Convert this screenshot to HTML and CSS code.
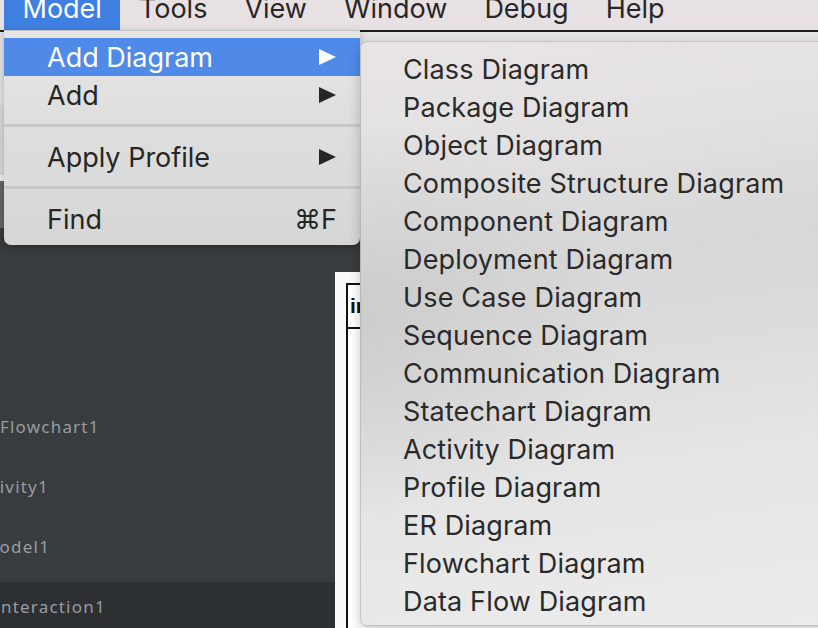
FILE: index.html
```html
<!DOCTYPE html>
<html lang="en">
<head>
<meta charset="utf-8">
<title>StarUML – Model menu</title>
<link rel="stylesheet" href="styles.css">
</head>
<body>
<div class="screen">
  <nav class="menubar">
    <span class="mb-item active">Model</span>
    <span class="mb-item">Tools</span>
    <span class="mb-item">View</span>
    <span class="mb-item">Window</span>
    <span class="mb-item">Debug</span>
    <span class="mb-item">Help</span>
  </nav>

  <div class="window">
    <div class="toolbar"><span class="tb-label">Java</span></div>
    <div class="tabstrip"></div>
    <div class="propbar"></div>
    <div class="workspace">
      <aside class="explorer">
        <div class="row r-flow">Flowchart1</div>
        <div class="row r-act">Activity1</div>
        <div class="row r-model">Model1</div>
        <div class="row r-int selected">Interaction1</div>
      </aside>
      <section class="editor">
        <div class="editor-tabs"></div>
        <div class="canvas">
          <div class="frame">
            <div class="frame-head">interaction Interaction1</div>
          </div>
        </div>
      </section>
    </div>
  </div>

  <div class="menu model-menu">
    <div class="item hl"><span class="label">Add Diagram</span><svg class="arrow" viewBox="0 0 17 16"><polygon points="0,0 17,8 0,16"/></svg></div>
    <div class="item"><span class="label">Add</span><svg class="arrow" viewBox="0 0 17 16"><polygon points="0,0 17,8 0,16"/></svg></div>
    <div class="sep"></div>
    <div class="item"><span class="label">Apply Profile</span><svg class="arrow" viewBox="0 0 17 16"><polygon points="0,0 17,8 0,16"/></svg></div>
    <div class="sep"></div>
    <div class="item"><span class="label">Find</span><span class="key">⌘F</span></div>
  </div>

  <div class="menu submenu">
    <div class="item">Class Diagram</div>
    <div class="item">Package Diagram</div>
    <div class="item">Object Diagram</div>
    <div class="item">Composite Structure Diagram</div>
    <div class="item">Component Diagram</div>
    <div class="item">Deployment Diagram</div>
    <div class="item">Use Case Diagram</div>
    <div class="item">Sequence Diagram</div>
    <div class="item">Communication Diagram</div>
    <div class="item">Statechart Diagram</div>
    <div class="item">Activity Diagram</div>
    <div class="item">Profile Diagram</div>
    <div class="item">ER Diagram</div>
    <div class="item">Flowchart Diagram</div>
    <div class="item">Data Flow Diagram</div>
  </div>
</div>
</body>
</html>
```
FILE: styles.css
```css
* { box-sizing: border-box; }
html, body { margin: 0; padding: 0; }
body {
  width: 818px;
  height: 628px;
  overflow: hidden;
  background: #383c3f;
  font-family: "Inter", "Noto Sans", sans-serif;
}
.screen {
  position: relative;
  width: 818px;
  height: 628px;
  overflow: hidden;
  display: flex;
  flex-direction: column;
}

/* top menu bar */
.menubar {
  flex: none;
  height: 30px;
  display: flex;
  padding-left: 4px;
  background: #e7e1e3;
  color: #2a2627;
  font-size: 27px;
  line-height: 17px;
}
.mb-item {
  height: 30px;
  padding: 0 18.5px;
  white-space: nowrap;
}
.mb-item.active {
  background: #3f7fe1;
  color: #fff;
}

/* application window behind the menus */
.window {
  flex: 1;
  display: flex;
  flex-direction: column;
  border-top: 2px solid #1d1d1e;
}
.toolbar {
  flex: none;
  height: 143px;
  background: linear-gradient(#e4e4e4 0 73px, #d9d9d9 73px);
  display: flex;
  align-items: flex-end;
  padding-bottom: 10px;
}
.tb-label {
  margin-left: -41px;
  font-family: "Noto Sans", sans-serif;
  font-size: 20px;
  color: #333;
}
.tabstrip { flex: none; height: 6px; background: #f1f1f1; }
.propbar { flex: none; height: 47px; background: #626663; }
.workspace {
  flex: 1;
  display: grid;
  grid-template-columns: 335px 1fr;
  min-height: 0;
}
.explorer {
  background: #383c3f;
  padding-top: 174px;
  font-family: "Noto Sans", sans-serif;
  font-size: 17px;
  letter-spacing: 1.2px;
  color: #999ca0;
  overflow: hidden;
}
.row {
  height: 52px;
  line-height: 50px;
  margin-bottom: 8px;
  white-space: nowrap;
}
.row.selected { background: #2d3033; }
.r-flow { text-indent: 0; }
.r-act { text-indent: -29px; }
.r-model { text-indent: -17px; }
.r-int { text-indent: -6px; }

.editor {
  display: flex;
  flex-direction: column;
  min-width: 0;
}
.editor-tabs { flex: none; height: 44px; background: #393d40; }
.canvas {
  flex: 1;
  background: #fafafa;
  padding: 11px 0 0 11px;
  overflow: hidden;
}
.frame {
  height: 400px;
  border: 2px solid #111;
  border-right: none;
  background: #fff;
}
.frame-head {
  height: 44px;
  line-height: 42px;
  padding-left: 2px;
  border-bottom: 2px solid #111;
  font-family: "Liberation Sans", sans-serif;
  font-weight: bold;
  font-size: 21px;
  color: #111;
  white-space: nowrap;
}

/* menus */
.menu {
  position: absolute;
  font-size: 27px;
  color: #262626;
}
.item {
  height: 38px;
  display: flex;
  align-items: center;
  white-space: nowrap;
}
.model-menu {
  left: 4px;
  top: 30px;
  width: 356px;
  padding: 7px 0 7px;
  border-top: 1px solid #c6c6c6;
  border-radius: 0 0 7px 7px;
  background: linear-gradient(#e5e5e5, #d6d6d6);
  box-shadow: 0 3px 8px rgba(0, 0, 0, 0.25);
}
.model-menu .item { padding: 0 24px 0 43px; }
.model-menu .label { flex: 1; }
.model-menu .item.hl { background: #4f8ae9; color: #fff; }
.arrow { width: 17px; height: 16px; fill: #262626; }
.item.hl .arrow { fill: #fff; }
.key { font-family: "Inter", "DejaVu Sans", sans-serif; margin-right: -1px; }
.sep {
  height: 3px;
  margin: 10px 0 11px;
  background: #c8c8c8;
}

.submenu {
  left: 360px;
  top: 41px;
  width: 480px;
  height: 585px;
  padding: 8px 0 5px;
  border: 1px solid rgba(0, 0, 0, 0.16);
  border-right: none;
  border-radius: 7px 0 0 7px;
  background:
    radial-gradient(ellipse 260px 200px at 0% 48%, rgba(190, 190, 190, 0.45), rgba(190, 190, 190, 0)),
    linear-gradient(172deg, #e8e4e5 0%, #e5e2e3 14%, #d8d8d8 38%, #dbdbdb 50%, #e5e5e5 72%, #ececec 100%);
  box-shadow: 0 4px 12px rgba(0, 0, 0, 0.22);
}
.submenu .item { padding-left: 42px; color: #2a2a2a; letter-spacing: 0.15px; }
```
